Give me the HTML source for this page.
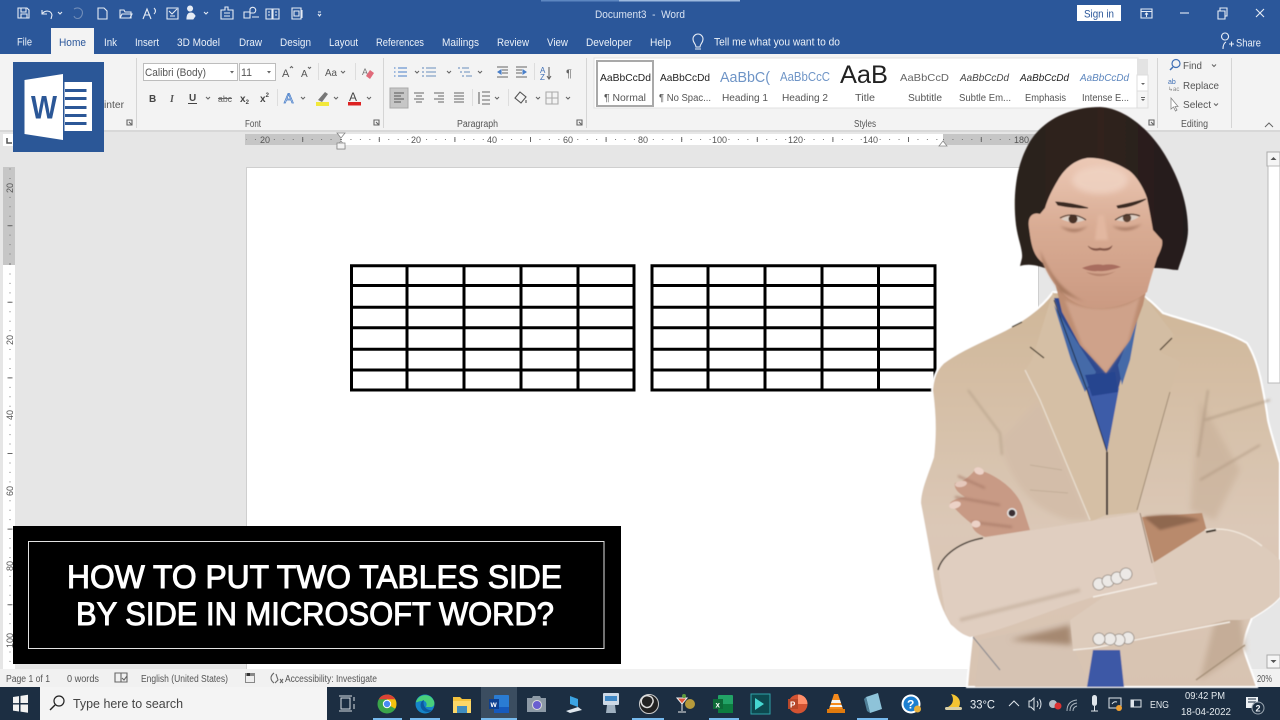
<!DOCTYPE html>
<html><head><meta charset="utf-8"><title>Word</title>
<style>
html,body{margin:0;padding:0;background:#e6e6e6;width:1280px;height:720px;overflow:hidden}
svg{display:block;position:absolute;left:0;top:0}
text{font-family:"Liberation Sans",sans-serif;font-size:10px;fill:#555;white-space:pre}
.t{font-size:11px;fill:#eaf0f8}
.g{font-size:10px;fill:#555}
.i{fill:none;stroke:#666;stroke-width:1.1}
.w{fill:none;stroke:#e6ecf5;stroke-width:1.1}
</style></head><body>
<svg width="1280" height="720" viewBox="0 0 1280 720" xmlns="http://www.w3.org/2000/svg">
<defs>
<filter id="b" x="-5%" y="-5%" width="110%" height="110%"><feGaussianBlur stdDeviation="0.35"/></filter>
<filter id="p" x="-5%" y="-5%" width="110%" height="110%"><feGaussianBlur stdDeviation="0.6"/></filter>
<filter id="s" x="-30%" y="-30%" width="160%" height="160%"><feGaussianBlur stdDeviation="3"/></filter>
<filter id="s2" x="-30%" y="-30%" width="160%" height="160%"><feGaussianBlur stdDeviation="1.2"/></filter>
<linearGradient id="jk" x1="0" y1="0" x2="0" y2="1"><stop offset="0" stop-color="#cfb698"/><stop offset=".3" stop-color="#d6c0a8"/><stop offset=".6" stop-color="#dbc8b7"/><stop offset="1" stop-color="#d8c3b1"/></linearGradient>
<linearGradient id="fc" x1="0" y1="0" x2="0" y2="1"><stop offset="0" stop-color="#ecc9b6"/><stop offset=".45" stop-color="#d9ac94"/><stop offset="1" stop-color="#cb9a82"/></linearGradient>
<linearGradient id="hr" x1="0" y1="0" x2="1" y2="0"><stop offset="0" stop-color="#2b201d"/><stop offset=".5" stop-color="#30241f"/><stop offset="1" stop-color="#241a1a"/></linearGradient>
</defs>

<!-- backgrounds -->
<rect width="1280" height="720" fill="#e6e6e6"/>
<rect y="0" width="1280" height="54" fill="#2b579a"/>
<rect x="541" y="0" width="78" height="1.5" fill="#5c86c0"/><rect x="619" y="0" width="121" height="1.5" fill="#9db9de"/>
<rect y="54" width="1280" height="77" fill="#f3f3f3"/>
<rect y="130" width="1280" height="2" fill="#d8d8d8"/>
<rect x="51" y="28" width="43" height="27" fill="#f3f3f3"/>

<!-- page -->
<rect x="246" y="167" width="793" height="502" fill="#cfcfcf"/>
<rect x="247" y="168" width="791" height="501" fill="#fff"/>

<g filter="url(#b)">
<!-- title bar -->
<g class="w">
<path d="M18 8h9l2 2v8H18zM21 8v4h5V8M21 18v-4h6v4"/>
<path d="M42 10v4h5M42 14c3-4 9-4 10 1l-1 4"/><path d="M58 12l2 2 2-2"/>
<path d="M74 9c5-3 10 1 8 6s-7 4-8 1" style="stroke:#6f8cb8"/>
<path d="M98 8h6l3 3v8h-9z"/>
<path d="M120 18v-8h4l1 2h6v6zM120 18l2-4h10l-2 4"/>
<path d="M143 19l4-10 4 10M145 15h5M154 8q3 3 0 6"/>
<path d="M167 8h11v11h-11zM169 11l3 3 5-5M170 16h5"/>
<path d="M190 11a2.5 2.5 0 1 1 .1 0M187 19c0-4 1-6 4-6s3 2 4 3l-2 3z" style="fill:#e6ecf5"/>
<path d="M204 12l2 2 2-2"/>
<path d="M221 10h4v-3h3v3h5v9h-12zM224 13h6M224 16h6"/>
<path d="M244 12h6v6h-6zM250 9a3 3 0 1 1 4 4h-4zM252 17h7"/>
<path d="M266 9h6v10h-6zM273 9h6v10h-6zM268 12h2M268 15h2M275 12h2M275 15h2"/>
<path d="M292 8h9v11h-9zM294 11h5v5h-5zM302 10v8"/>
<path d="M318 12h3M318 14l1.5 2 1.5-2"/>
</g>
<text class="t" x="595" y="18" textLength="90" lengthAdjust="spacingAndGlyphs" style="fill:#d9e3f2">Document3  -  Word</text>
<rect x="1077" y="5" width="44" height="16" fill="#fff"/>
<text x="1084" y="17.5" textLength="30" lengthAdjust="spacingAndGlyphs" style="font-size:11px;fill:#2b579a">Sign in</text>
<g class="w">
<path d="M1141 9h11v9h-11zM1141 11.5h11M1146.5 17v-4M1145 14.5l1.5-1.5 1.5 1.5"/>
<path d="M1180 13h9"/>
<path d="M1218 11h7v8h-7zM1220 11V8h7v8h-2"/>
<path d="M1256 9l8 8M1264 9l-8 8"/>
</g>

<!-- tabs -->
<text class="t" x="17" y="45.5" textLength="15" lengthAdjust="spacingAndGlyphs">File</text>
<text class="t" x="59" y="46" textLength="27" lengthAdjust="spacingAndGlyphs" style="fill:#2b579a">Home</text>
<text class="t" x="104" y="46" textLength="13" lengthAdjust="spacingAndGlyphs">Ink</text>
<text class="t" x="135" y="46" textLength="24" lengthAdjust="spacingAndGlyphs">Insert</text>
<text class="t" x="177" y="46" textLength="43" lengthAdjust="spacingAndGlyphs">3D Model</text>
<text class="t" x="239" y="46" textLength="23" lengthAdjust="spacingAndGlyphs">Draw</text>
<text class="t" x="280" y="46" textLength="31" lengthAdjust="spacingAndGlyphs">Design</text>
<text class="t" x="329" y="46" textLength="29" lengthAdjust="spacingAndGlyphs">Layout</text>
<text class="t" x="376" y="46" textLength="48" lengthAdjust="spacingAndGlyphs">References</text>
<text class="t" x="442" y="46" textLength="37" lengthAdjust="spacingAndGlyphs">Mailings</text>
<text class="t" x="497" y="46" textLength="32" lengthAdjust="spacingAndGlyphs">Review</text>
<text class="t" x="547" y="46" textLength="21" lengthAdjust="spacingAndGlyphs">View</text>
<text class="t" x="586" y="46" textLength="46" lengthAdjust="spacingAndGlyphs">Developer</text>
<text class="t" x="650" y="46" textLength="21" lengthAdjust="spacingAndGlyphs">Help</text>
<path class="w" d="M695 49h6M696 47c0-3-3-4-3-8a5 5 0 0 1 10 0c0 4-3 5-3 8z"/>
<text class="t" x="714" y="45.5" textLength="126" lengthAdjust="spacingAndGlyphs">Tell me what you want to do</text>
<path class="w" d="M1225 40a3.500 3.500 0 1 1 .1 0M1223 49c0-4 1-6 3-7M1229 44h5M1231.500 41.500v5"/>
<text class="t" x="1236" y="46.5" textLength="25" lengthAdjust="spacingAndGlyphs">Share</text>

<!-- clipboard remnant -->
<text class="g" x="104" y="108" textLength="20" lengthAdjust="spacingAndGlyphs">inter</text>
<path class="i" d="M127 120h5v5h-5zM129 122l3 3"/>
<rect x="136" y="58" width="1" height="70" fill="#d5d5d5"/>

<!-- font group -->
<rect x="143.5" y="63.5" width="94" height="17" fill="#fff" stroke="#bdbdbd"/>
<text x="145" y="76" textLength="61" lengthAdjust="spacingAndGlyphs" style="font-size:11px;fill:#555">Calibri (Body)</text>
<path d="M230 71l2 2.500 2-2.500z" fill="#666"/>
<rect x="239.5" y="63.5" width="36" height="17" fill="#fff" stroke="#bdbdbd"/>
<text x="241" y="76" textLength="11" lengthAdjust="spacingAndGlyphs" style="font-size:11px;fill:#555">11</text>
<path d="M267 71l2 2.500 2-2.500z" fill="#666"/>
<text x="282" y="77" style="font-size:11px;fill:#555">A</text><path class="i" d="M290 68l1.500-1.500 1.500 1.500"/>
<text x="301" y="77" style="font-size:10px;fill:#555">A</text><path class="i" d="M308 67l1.500 1.500 1.500-1.500"/>
<rect x="318" y="63" width="1" height="17" fill="#ddd"/>
<text x="325" y="76" textLength="12" lengthAdjust="spacingAndGlyphs" style="font-size:10.5px;fill:#555">Aa</text><path class="i" d="M341 71l2 2 2-2"/>
<rect x="355" y="63" width="1" height="17" fill="#ddd"/>
<text x="362" y="75" style="font-size:9px;fill:#777">A</text><path d="M366 76l4-6 4 3-4 6z" fill="#e06a7a"/>
<text x="149" y="102" style="font-size:10px;font-weight:bold;fill:#444">B</text>
<text x="170" y="102" style="font-size:10px;font-style:italic;font-weight:bold;fill:#555;font-family:'Liberation Serif',serif">I</text>
<text x="189" y="101" style="font-size:10px;font-weight:bold;fill:#444">U</text><rect x="188" y="103" width="9" height="1" fill="#444"/>
<path class="i" d="M206 97l2 2 2-2"/>
<text x="218" y="102" textLength="14" lengthAdjust="spacingAndGlyphs" style="font-size:9.5px;fill:#666">abc</text><rect x="218" y="98" width="14" height="1" fill="#666"/>
<text x="240" y="102" style="font-size:10px;font-weight:bold;fill:#444">x<tspan font-size="6" dy="2">2</tspan></text>
<text x="260" y="102" style="font-size:10px;font-weight:bold;fill:#444">x<tspan font-size="6" dy="-5">2</tspan></text>
<rect x="277" y="89" width="1" height="17" fill="#ddd"/>
<text x="284" y="103" style="font-size:14px;fill:#fff;stroke:#4a7fc9;stroke-width:.8">A</text><path class="i" d="M301 97l2 2 2-2"/>
<rect x="316" y="102" width="13" height="4" fill="#f2e83a"/><path d="M318 100l7-8 3 2-6 8z" fill="#777"/><path class="i" d="M334 97l2 2 2-2"/>
<text x="349" y="101" style="font-size:12px;fill:#444">A</text><rect x="348" y="102" width="13" height="3.5" fill="#d22"/><path class="i" d="M367 97l2 2 2-2"/>
<text class="g" x="245" y="127" textLength="16" lengthAdjust="spacingAndGlyphs">Font</text>
<path class="i" d="M374 120h5v5h-5zM376 122l3 3"/>
<rect x="383" y="58" width="1" height="70" fill="#d5d5d5"/>

<!-- paragraph -->
<g class="i">
<path d="M398 68h9M398 72h9M398 76h9M394 68h1.500M394 72h1.500M394 76h1.500" style="stroke:#4a7fc9"/>
<path d="M426 68h10M426 72h10M426 76h10M423 67v2M423 71v2M423 75v2" style="stroke:#6b8fbe"/>
<path d="M462 68h7M464 72h6M466 76h6M459 67v2M461 71v2M463 75v2" style="stroke:#6b8fbe"/>
<path d="M415 71l2 2 2-2M447 71l2 2 2-2M478 71l2 2 2-2"/>
<path d="M497 67h11M502 70h6M502 73h6M497 77h11"/><path d="M501 70l-3 2 3 2z" style="fill:#4a7fc9;stroke:#4a7fc9"/>
<path d="M516 67h11M516 70h6M516 73h6M516 77h11"/><path d="M523 70l3 2-3 2z" style="fill:#4a7fc9;stroke:#4a7fc9"/>
</g>
<rect x="534" y="63" width="1" height="17" fill="#ddd"/>
<text x="540" y="73" style="font-size:8px;fill:#3f6fb5">A</text><text x="540" y="80" style="font-size:8px;fill:#3f6fb5">Z</text><path class="i" d="M549 67v12M547 76l2 3 2-3"/>
<text x="566" y="77" style="font-size:11px;fill:#666">¶</text>
<rect x="390" y="88" width="18" height="20" fill="#c6c6c6" stroke="#a9a9a9"/>
<g class="i">
<path d="M394 93h10M394 96h7M394 99h10M394 102h7" style="stroke:#555"/>
<path d="M414 93h10M416 96h6M414 99h10M416 102h6"/>
<path d="M434 93h10M438 96h6M434 99h10M438 102h6"/>
<path d="M454 93h10M454 96h10M454 99h10M454 102h10"/>
<path d="M482 92h8M482 96h8M482 100h8M482 104h8M479 92v12"/>
<path d="M495 97l2 2 2-2M536 97l2 2 2-2M566 97l2 2 2-2"/>
<path d="M515 98l5-6 6 5-5 6zM526 100v3" style="stroke:#555"/>
<path d="M546 92h12v12h-12zM552 92v12M546 98h12" style="stroke:#aaa"/>
</g>
<rect x="472" y="89" width="1" height="17" fill="#ddd"/><rect x="508" y="89" width="1" height="17" fill="#ddd"/>
<text class="g" x="457" y="127" textLength="41" lengthAdjust="spacingAndGlyphs">Paragraph</text>
<path class="i" d="M577 120h5v5h-5zM579 122l3 3"/>
<rect x="586" y="58" width="1" height="70" fill="#d5d5d5"/>

<!-- styles -->
<rect x="594" y="58" width="544" height="50" fill="#fff" stroke="#e0e0e0"/>
<rect x="597" y="61" width="56" height="45" fill="#fff" stroke="#a9a9a9" stroke-width="2"/>
<text x="600" y="81" textLength="51" lengthAdjust="spacingAndGlyphs" style="font-size:10.5px;fill:#222">AaBbCcDd</text>
<text x="604" y="101" textLength="42" lengthAdjust="spacingAndGlyphs">¶ Normal</text>
<text x="660" y="81" textLength="50" lengthAdjust="spacingAndGlyphs" style="font-size:10.5px;fill:#222">AaBbCcDd</text>
<text x="659" y="101" textLength="52" lengthAdjust="spacingAndGlyphs">¶ No Spac...</text>
<text x="720" y="82" textLength="50" lengthAdjust="spacingAndGlyphs" style="font-size:15px;fill:#6e94c6">AaBbC(</text>
<text x="722" y="101" textLength="46" lengthAdjust="spacingAndGlyphs">Heading 1</text>
<text x="780" y="81" textLength="50" lengthAdjust="spacingAndGlyphs" style="font-size:13px;fill:#6e94c6">AaBbCcC</text>
<text x="782" y="101" textLength="46" lengthAdjust="spacingAndGlyphs">Heading 2</text>
<text x="840" y="83" textLength="48" lengthAdjust="spacingAndGlyphs" style="font-size:25px;fill:#222">AaB</text>
<rect x="838" y="59" width="54" height="5" fill="#fff"/>
<text x="855" y="101" textLength="20" lengthAdjust="spacingAndGlyphs">Title</text>
<text x="900" y="81" textLength="49" lengthAdjust="spacingAndGlyphs" style="font-size:10.5px;fill:#666">AaBbCcD</text>
<text x="908" y="101" textLength="34" lengthAdjust="spacingAndGlyphs">Subtitle</text>
<text x="960" y="81" textLength="49" lengthAdjust="spacingAndGlyphs" style="font-size:10.5px;font-style:italic;fill:#444">AaBbCcDd</text>
<text x="959" y="101" textLength="52" lengthAdjust="spacingAndGlyphs">Subtle Em...</text>
<text x="1020" y="81" textLength="49" lengthAdjust="spacingAndGlyphs" style="font-size:10.5px;font-style:italic;fill:#222">AaBbCcDd</text>
<text x="1025" y="101" textLength="41" lengthAdjust="spacingAndGlyphs">Emphasis</text>
<text x="1080" y="81" textLength="49" lengthAdjust="spacingAndGlyphs" style="font-size:10.5px;font-style:italic;fill:#5b85bd">AaBbCcDd</text>
<text x="1082" y="101" textLength="47" lengthAdjust="spacingAndGlyphs">Intense E...</text>
<rect x="1137" y="59" width="11" height="16" fill="#e3e3e3"/><rect x="1137" y="75" width="11" height="16" fill="#fff" stroke="#ddd"/><rect x="1137" y="91" width="11" height="17" fill="#f5f5f5" stroke="#ddd"/>
<path d="M1141 83l2 2 2-2z M1141 99l2 2 2-2z" fill="#666"/><rect x="1141" y="97" width="4" height="1" fill="#666"/>
<text class="g" x="854" y="127" textLength="22" lengthAdjust="spacingAndGlyphs">Styles</text>
<path class="i" d="M1149 120h5v5h-5zM1151 122l3 3"/>
<rect x="1157" y="58" width="1" height="70" fill="#d5d5d5"/>

<!-- editing -->
<path d="M1170 70l3-3" stroke="#3f6fb5" stroke-width="1.5" fill="none"/><circle cx="1176" cy="63.5" r="4" fill="none" stroke="#3f6fb5" stroke-width="1.2"/>
<text x="1183" y="69" textLength="19" lengthAdjust="spacingAndGlyphs" style="font-size:10.5px;fill:#555">Find</text>
<path class="i" d="M1212 64.500l2 2 2-2"/>
<text x="1168" y="84" style="font-size:7px;fill:#3f6fb5">ab</text><text x="1168" y="91" style="font-size:6px;fill:#888">↳ac</text>
<text x="1183" y="89" textLength="36" lengthAdjust="spacingAndGlyphs" style="font-size:10.5px;fill:#555">Replace</text>
<path d="M1171 98v11l2.500-2 2 4 1.500-1-2-3.500h3z" fill="#fff" stroke="#888" stroke-width=".8"/>
<text x="1183" y="108" textLength="28" lengthAdjust="spacingAndGlyphs" style="font-size:10.5px;fill:#555">Select</text>
<path class="i" d="M1214 103.500l2 2 2-2"/>
<text class="g" x="1181" y="127" textLength="27" lengthAdjust="spacingAndGlyphs">Editing</text>
<rect x="1231" y="58" width="1" height="70" fill="#d5d5d5"/>
<path d="M1265 127l4-4 4 4" fill="none" stroke="#666"/>

<!-- h ruler -->
<rect x="3" y="134" width="12" height="12" fill="#fff"/><path d="M7 138v5h5" stroke="#555" stroke-width="1.5" fill="none"/>
<rect x="245" y="134" width="96" height="11" fill="#c6c6c6"/>
<rect x="341" y="134" width="602" height="11" fill="#fff"/>
<rect x="943" y="134" width="95" height="11" fill="#c6c6c6"/>
<line x1="341" y1="139.5" x2="943" y2="139.5" stroke="#777" stroke-dasharray="1 8.45"/>
<line x1="341" y1="139.5" x2="246" y2="139.5" stroke="#777" stroke-dasharray="1 8.45"/>
<line x1="943" y1="139.5" x2="1037" y2="139.5" stroke="#777" stroke-dasharray="1 8.45"/>
<line x1="378.8" y1="139.5" x2="943" y2="139.5" stroke="#666" stroke-width="5" stroke-dasharray="1 74.6"/>
<line x1="303.2" y1="139.5" x2="246" y2="139.5" stroke="#666" stroke-width="5" stroke-dasharray="1 74.6"/>
<line x1="980.8" y1="139.5" x2="1037" y2="139.5" stroke="#666" stroke-width="5" stroke-dasharray="1 74.6"/>
<rect x="258" y="135" width="12" height="9" fill="#c6c6c6"/><text x="260" y="143" style="font-size:9px">20</text>
<rect x="410" y="135" width="13" height="9" fill="#fff"/><text x="411" y="143" style="font-size:9px">20</text>
<rect x="486" y="135" width="13" height="9" fill="#fff"/><text x="487" y="143" style="font-size:9px">40</text>
<rect x="562" y="135" width="13" height="9" fill="#fff"/><text x="563" y="143" style="font-size:9px">60</text>
<rect x="637" y="135" width="13" height="9" fill="#fff"/><text x="638" y="143" style="font-size:9px">80</text>
<rect x="711" y="135" width="17" height="9" fill="#fff"/><text x="712" y="143" style="font-size:9px">100</text>
<rect x="787" y="135" width="17" height="9" fill="#fff"/><text x="788" y="143" style="font-size:9px">120</text>
<rect x="862" y="135" width="17" height="9" fill="#fff"/><text x="863" y="143" style="font-size:9px">140</text>
<rect x="1013" y="135" width="17" height="9" fill="#c6c6c6"/><text x="1014" y="143" style="font-size:9px">180</text>
<path d="M337 133h8l-4 5zM337 146l4-5 4 5v3h-8z" fill="#fff" stroke="#888" stroke-width=".8"/>
<rect x="337" y="143" width="8" height="6" fill="#f3f3f3" stroke="#888" stroke-width=".8"/>
<path d="M939 146l4-5 4 5z" fill="#fff" stroke="#888" stroke-width=".8"/>

<!-- v ruler -->
<rect x="3" y="167" width="12" height="98" fill="#c6c6c6"/>
<rect x="3" y="265" width="12" height="404" fill="#fff"/>
<line x1="10" y1="264" x2="10" y2="168" stroke="#777" stroke-dasharray="1 8.45"/>
<line x1="10" y1="264" x2="10" y2="668" stroke="#777" stroke-dasharray="1 8.45"/>
<line x1="10" y1="226.2" x2="10" y2="168" stroke="#666" stroke-width="5" stroke-dasharray="1 74.6"/>
<line x1="10" y1="301.8" x2="10" y2="668" stroke="#666" stroke-width="5" stroke-dasharray="1 74.6"/>
<rect x="4" y="181" width="10" height="14" fill="#c6c6c6"/><text transform="translate(13,193) rotate(-90)" style="font-size:9px">20</text>
<rect x="4" y="333" width="10" height="14" fill="#fff"/><text transform="translate(13,345) rotate(-90)" style="font-size:9px">20</text>
<rect x="4" y="408" width="10" height="14" fill="#fff"/><text transform="translate(13,420) rotate(-90)" style="font-size:9px">40</text>
<rect x="4" y="484" width="10" height="14" fill="#fff"/><text transform="translate(13,496) rotate(-90)" style="font-size:9px">60</text>
<rect x="4" y="559" width="10" height="14" fill="#fff"/><text transform="translate(13,571) rotate(-90)" style="font-size:9px">80</text>
<rect x="4" y="632" width="10" height="18" fill="#fff"/><text transform="translate(13,648) rotate(-90)" style="font-size:9px">100</text>

<!-- scrollbar -->
<rect x="1267" y="152" width="13" height="516" fill="#e6e6e6"/>
<rect x="1267" y="152" width="13" height="14" fill="#f5f5f5" stroke="#aaa"/>
<rect x="1268" y="166" width="12" height="217" fill="#fff" stroke="#bbb"/>
<rect x="1267" y="655" width="13" height="13" fill="#f5f5f5" stroke="#aaa"/>
<path d="M1270.5 160l3-3 3 3z M1270.5 660l3 3 3-3z" fill="#555"/>

<!-- tables -->
<g fill="none" stroke="#000" stroke-width="3">
<path d="M351.5 265.7H634V390H351.5Z"/>
<path d="M407 265v125M464 265v125M521 265v125M578 265v125"/>
<path d="M351 285.5H634M351 307.3H634M351 327.7H634M351 349.3H634M351 370H634"/>
<path d="M652 265.7H935V390H652Z"/>
<path d="M708 265v125M765 265v125M822 265v125M878.5 265v125"/>
<path d="M652 285.5H935M652 307.3H935M652 327.7H935M652 349.3H935M652 370H935"/>
</g>
</g>

<!-- status bar -->
<g filter="url(#b)">
<rect y="669" width="1280" height="18" fill="#f1f1f1"/>
<text x="6" y="682" textLength="44" lengthAdjust="spacingAndGlyphs" style="font-size:10px;fill:#555">Page 1 of 1</text>
<text x="67" y="682" textLength="32" lengthAdjust="spacingAndGlyphs" style="font-size:10px;fill:#555">0 words</text>
<path class="i" d="M115 673h6v9h-6zM121 673h6v9h-6zM122 678l2 2 3-4"/>
<text x="141" y="682" textLength="87" lengthAdjust="spacingAndGlyphs" style="font-size:10px;fill:#555">English (United States)</text>
<path d="M245 673h10v10h-10z" fill="#888"/><rect x="246" y="676" width="8" height="6" fill="#eee"/><rect x="247" y="673" width="3" height="3" fill="#333"/>
<path class="i" d="M274 673c-4 3-4 7 0 10M276 674l2 6-3 3M280 679l3 4M283 679l-3 4"/>
<text x="285" y="682" textLength="92" lengthAdjust="spacingAndGlyphs" style="font-size:10px;fill:#555">Accessibility: Investigate</text>
<text x="1257" y="682" textLength="15" lengthAdjust="spacingAndGlyphs" style="font-size:10px;fill:#555">20%</text>
</g>

<!-- taskbar -->
<g filter="url(#b)">
<rect y="687" width="1280" height="33" fill="#1b2f42"/>
<path d="M13 697l6-.9v7h-6zM20.5 695.900l7.500-1.100v8.200h-7.500zM13 704.500h6v7l-6-.9zM20.5 704.500h7.500v8.200l-7.500-1.100z" fill="#f2f2f2"/>
<rect x="40" y="687" width="287" height="33" fill="#f4f4f4"/>
<path d="M50 710l5-5" stroke="#222" stroke-width="1.4"/><circle cx="59" cy="701" r="5" fill="none" stroke="#222" stroke-width="1.2"/>
<text x="73" y="708" textLength="110" lengthAdjust="spacingAndGlyphs" style="font-size:13px;fill:#444">Type here to search</text>
<rect x="481" y="687" width="36" height="33" fill="#3a4d60"/>
<path d="M341 698h9v11h-9zM339 696h13M339 711h13M354 697v4M354 704v5" fill="none" stroke="#d8dde3"/>
<!-- chrome -->
<circle cx="387" cy="704" r="9.5" fill="#3ba54a"/>
<path d="M387 694.500a9.500 9.500 0 0 1 8.200 14.250L387 704z" fill="#f4c20d"/>
<path d="M378.800 699.250A9.500 9.500 0 0 1 395.200 699.250H387z" fill="#dd4335"/>
<circle cx="387" cy="704" r="4.2" fill="#fff"/><circle cx="387" cy="704" r="3.2" fill="#4a8af4"/>
<!-- edge -->
<circle cx="425" cy="704" r="9.5" fill="#1484c8"/>
<path d="M416 702c2-8 14-10 18-1 1 3 0 6-3 6h-5c2-4-1-7-4-6-4 0-5 2-6 1z" fill="#4ad07c"/>
<path d="M424 700c-4 1-5 8 0 11 2 1 5 2 8-1-5 1-10-4-8-10z" fill="#0c5aa0"/>
<!-- explorer -->
<path d="M453 697h7l2 2h9v14h-18z" fill="#f3c23c"/><rect x="453" y="701" width="18" height="12" fill="#fbd767"/><rect x="457" y="706" width="10" height="7" fill="#3f8dbf"/>
<!-- word -->
<rect x="494" y="695" width="15" height="18" rx="1" fill="#2b7cd3"/><rect x="494" y="707" width="15" height="6" fill="#185abd"/><rect x="489" y="699" width="10" height="10" fill="#103f91"/>
<text x="490.5" y="707" style="font-size:8px;font-weight:bold;fill:#fff">w</text>
<!-- camera -->
<path d="M527 698h5l1-2h7l1 2h5v14h-19z" fill="#8d9aa6"/><circle cx="537" cy="705" r="4.5" fill="#6a5fd0" stroke="#ddd"/>
<!-- pc -->
<path d="M570 696l8 3v8l-8-3z" fill="#3aa3e3"/><path d="M566 711l12-4 4 3-12 3z" fill="#dfe7ee"/>
<!-- monitor -->
<rect x="603" y="693" width="16" height="12" rx="1" fill="#cdd9e6"/><rect x="605" y="696" width="12" height="5" fill="#3f88c5"/><path d="M607 705h8l1 8h-10z" fill="#9fb0c0"/>
<!-- obs -->
<circle cx="649" cy="704" r="9.5" fill="#222" stroke="#ccc"/><path d="M649 696a5 5 0 0 1 3 8 5 5 0 0 1-7 3 5 5 0 0 1 4-11z" fill="none" stroke="#ddd" stroke-width="1.5"/>
<!-- cocktail -->
<path d="M677 698h10l-5 6zM682 704v7M678 712h8" fill="#e0573a" stroke="#eee"/><circle cx="690" cy="704" r="5" fill="#b69a3a"/><circle cx="684" cy="696" r="2" fill="#5c9a3d"/>
<!-- excel -->
<rect x="718" y="695" width="15" height="18" rx="1" fill="#21a366"/><rect x="718" y="704" width="15" height="9" fill="#107c41"/><rect x="713" y="699" width="10" height="10" fill="#0e6b37"/>
<text x="715.5" y="707.5" style="font-size:8px;font-weight:bold;fill:#fff">x</text>
<!-- teal -->
<rect x="751" y="694" width="19" height="20" fill="#0d4a50" stroke="#2fa3a8"/><path d="M755 698l9 6-9 6z" fill="#45d7d0"/>
<!-- ppt -->
<circle cx="798" cy="704" r="9.5" fill="#d35230"/><path d="M798 694.500a9.500 9.500 0 0 1 9.500 9.500H798z" fill="#ff8f6b"/><rect x="788" y="699" width="10" height="10" fill="#b7472a"/>
<text x="790" y="707.5" style="font-size:8px;font-weight:bold;fill:#fff">P</text>
<!-- vlc -->
<path d="M834 694h4l5 15h-14z" fill="#f58a1f"/><path d="M832 700h8l1 3h-10zM830.500 705h11l.9 2h-12.800z" fill="#f4f4f4"/><rect x="827" y="709" width="18" height="4" fill="#e07a10"/>
<!-- notes -->
<path d="M866 697l12-4 4 16-12 4z" fill="#8ec3d9"/><path d="M866 697l4 16-3-2-3-12z" fill="#4f7f97"/>
<!-- help -->
<circle cx="911" cy="704" r="9.5" fill="#fff"/><circle cx="911" cy="704" r="7.5" fill="#1d7fd0"/><text x="907" y="708.5" style="font-size:12px;font-weight:bold;fill:#fff">?</text><circle cx="917.5" cy="709" r="3.5" fill="#e8b03a"/>
<!-- weather -->
<path d="M951 694c3 4 3 10-3 13h11c3-6-1-12-8-13z" fill="#f4c430"/><rect x="945" y="707" width="17" height="3" rx="1.5" fill="#d8cfa8"/>
<text x="970" y="708.5" textLength="25" lengthAdjust="spacingAndGlyphs" style="font-size:12px;fill:#eef2f6">33°C</text>
<g fill="none" stroke="#dfe5eb">
<path d="M1009 706l5-5 5 5"/>
<path d="M1029 701h2l3-3v12l-3-3h-2zM1037 701q2 3 0 6M1039.500 699q3 5 0 10"/>
<path d="M1070 711q0-7 7-8M1073 711q0-4 4-5M1067 711q0-10 10-11" stroke="#aab4be"/>
<rect x="1109" y="698" width="12" height="10"/><path d="M1112 704q2-3 5-2"/>
<rect x="1131" y="700" width="10" height="7"/>
</g>
<circle cx="1053" cy="704" r="4" fill="#b4bcc4"/><circle cx="1058" cy="706" r="3.5" fill="#d33"/>
<rect x="1092" y="695" width="5" height="11" rx="2.5" fill="#dfe5eb"/><path d="M1094.500 706v5M1091 711h7" stroke="#dfe5eb"/>
<circle cx="1119" cy="708" r="3" fill="#f0a030"/><rect x="1131" y="700" width="3" height="7" fill="#dfe5eb"/>
<text x="1150" y="708" textLength="19" lengthAdjust="spacingAndGlyphs" style="font-size:10.5px;fill:#e4e9ee">ENG</text>
<text x="1185" y="699" textLength="40" lengthAdjust="spacingAndGlyphs" style="font-size:10.5px;fill:#e4e9ee">09:42 PM</text>
<text x="1181" y="715" textLength="50" lengthAdjust="spacingAndGlyphs" style="font-size:10.5px;fill:#e4e9ee">18-04-2022</text>
<path d="M1246 697h12v8l-3 3h-9z" fill="#eef2f6"/><path d="M1248 699h8M1248 702h8" stroke="#1b2f42"/>
<circle cx="1258" cy="708" r="6" fill="#1b2f42" stroke="#9aa5b0"/><text x="1255.5" y="711.5" style="font-size:9px;font-weight:bold;fill:#eef2f6">2</text>
<g fill="#76b9ed">
<rect x="373" y="718" width="29" height="2"/><rect x="410" y="718" width="30" height="2"/><rect x="481" y="718" width="36" height="2"/>
<rect x="632" y="718" width="32" height="2"/><rect x="709" y="718" width="30" height="2"/><rect x="857" y="718" width="31" height="2"/>
</g>
</g>

<!-- person -->
<g filter="url(#p)">
<path d="M1053 292C1040 310 1020 322 1005 330C985 340 960 350 943 363C936 370 933 378 932 390C936 420 935 440 933 457C927 475 920 490 920 503C925 530 930 555 933 577C937 600 942 612 950 625C958 632 965 636 972 637C970 655 968 672 967 687L1257 687C1252 672 1247 660 1243 647C1245 635 1248 628 1252 618C1262 612 1272 606 1280 597L1280 463C1275 445 1270 430 1268 420C1266 405 1264 395 1262 385C1258 365 1253 352 1247 343C1225 330 1190 322 1163 313C1155 305 1150 300 1145 297Z" fill="url(#jk)" stroke="#fff" stroke-width="2"/>
<!-- jacket shading -->
<path d="M1000 440C1010 480 1030 510 1070 520L1090 520L1040 400Z" fill="#d3bda9" filter="url(#s)"/>
<path d="M1200 400L1190 510L1215 520L1240 470Z" fill="#c7af98" filter="url(#s)" opacity=".6"/>
<path d="M980 640L1070 620L1075 650L1090 687L975 687Z" fill="#d6c3b3"/>
<path d="M1010 640L1070 625L1072 645Z" fill="#a58871" filter="url(#s)"/>
<path d="M1215 620L1240 610L1245 650L1200 680Z" fill="#c5ad98" filter="url(#s)"/>
<!-- lapels -->
<path d="M1053 292L1032 360L1025 370L1090 522L1106 515L1107 452L1087 390Z" fill="#d5bfa5"/>
<path d="M1145 297L1174 335L1160 352L1180 362L1170 392L1137 512L1108 515L1107 452L1118 390Z" fill="#d3bda3"/>
<!-- shirt -->
<path d="M1054 298L1143 298L1118 390L1107 452L1087 390Z" fill="#2f4a8f"/>
<path d="M1087 388L1119 388L1107 452Z" fill="#3d5ba8"/>
<path d="M1054 305L1066 325L1096 372L1085 392L1071 360Z" fill="#456ba8"/>
<path d="M1140 305L1132 330L1118 365L1122 385L1130 360Z" fill="#456ba8"/>
<path d="M1085 375L1115 372L1118 392L1092 396Z" fill="#27448f"/>
<path d="M1054 300L1087 390L1107 452" fill="none" stroke="#1f2840" stroke-width="1"/>
<path d="M1107 452V515" stroke="#3a3230" stroke-width="2" fill="none"/>
<!-- lapel lines -->
<path d="M1025 370L1040 400L1090 520" fill="none" stroke="#e8ddcf" stroke-width="1.3"/>
<path d="M1170 392L1137 510" fill="none" stroke="#a08b74" stroke-width="1"/>
<path d="M1030 347L1044 358M1012 327L1022 322" fill="none" stroke="#4a4030" stroke-width="1.3"/>
<path d="M1160 350L1172 338" fill="none" stroke="#5a4c3a" stroke-width="1.3"/>
<!-- lower blue -->
<path d="M1093 650L1120 650L1124 687L1087 687Z" fill="#3c59a6"/>
<!-- neck -->
<path d="M1055 282L1148 282L1143 305L1130 340L1106 373L1080 345L1062 312Z" fill="#bd8d72"/>
<path d="M1065 300C1085 312 1125 312 1140 296L1128 342L1106 373L1082 345Z" fill="#cfa28a" filter="url(#s2)"/>
<!-- hair -->
<path d="M1100 107C1070 107 1040 120 1027 147C1015 170 1013 200 1016 225C1018 240 1023 250 1022 258L1020 266C1030 263 1038 266 1045 268L1157 268C1165 268 1172 270 1178 270C1180 262 1188 245 1188 230C1188 205 1180 180 1165 155C1150 130 1125 108 1100 107Z" fill="url(#hr)"/>
<!-- face -->
<path d="M1087 158C1075 160 1065 168 1058 180C1052 190 1048 198 1045 208L1040 214C1033 212 1027 216 1029 228C1031 242 1032 255 1043 263C1048 275 1053 283 1060 290C1068 300 1080 307 1095 308C1110 309 1130 305 1147 292C1150 280 1154 268 1157 258C1161 250 1163 245 1162 240L1153 230C1151 218 1149 208 1147 198C1143 186 1135 174 1128 170C1115 162 1100 157 1087 158Z" fill="url(#fc)"/>
<ellipse cx="1100" cy="180" rx="28" ry="14" fill="#f0d4c4" filter="url(#s)" opacity=".8"/>
<path d="M1040 250C1048 270 1060 290 1085 302L1060 292L1043 263Z" fill="#a87a60" filter="url(#s2)"/>
<path d="M1060 226Q1074 238 1088 226Q1075 232 1060 226ZM1112 226Q1127 236 1142 224Q1127 230 1112 226Z" fill="#a87a64" filter="url(#s2)"/>
<!-- brows -->
<path d="M1056 202Q1072 203 1088 208Q1072 208 1058 205Z" fill="#3a2a24" stroke="#3a2a24"/>
<path d="M1117 206Q1132 203 1146 199Q1133 207 1118 208Z" fill="#3a2a24" stroke="#3a2a24"/>
<!-- eyes -->
<path d="M1061 219Q1073 212 1085 220Q1073 225 1061 219Z" fill="#dcd0c6"/>
<path d="M1116 220Q1128 212 1139 217Q1128 224 1116 220Z" fill="#dcd0c6"/>
<circle cx="1073" cy="219" r="4.5" fill="#4a3226"/><circle cx="1127" cy="218" r="4.2" fill="#5a4030"/>
<path d="M1060 218Q1073 211 1086 220M1115 220Q1128 211 1140 216" fill="none" stroke="#3a2a24" stroke-width="1.2"/>
<!-- nose -->
<path d="M1088 246Q1093 250 1100 248Q1107 250 1112 246Q1110 252 1100 250Q1092 252 1088 246Z" fill="#85584a" stroke="#85584a" stroke-width=".6"/>
<path d="M1098 215L1095 240L1108 240L1104 215Z" fill="#e2b7a0" filter="url(#s2)"/>
<!-- mouth -->
<path d="M1082 268Q1095 263 1103 265Q1112 263 1121 267Q1105 272 1098 271Q1090 272 1082 268Z" fill="#a86d5e"/>
<path d="M1086 272Q1100 281 1116 271Q1105 276 1086 272Z" fill="#b88670"/>
<!-- forearm right (lower) -->
<path d="M1142 517L1202 513L1208 535L1155 566Z" fill="#b98a6c"/>
<path d="M1144 517Q1175 512 1200 520L1160 530Z" fill="#8f6750" filter="url(#s2)"/>
<path d="M1153 563L1205 530C1225 528 1255 535 1280 560L1280 597C1272 606 1262 612 1252 618C1240 622 1230 618 1220 622L1073 650L1070 620Z" fill="#ddcbbb"/>
<path d="M1205 530Q1235 525 1262 546" fill="none" stroke="#f0e6da" stroke-width="1.5"/>
<path d="M1206 532L1216 530" stroke="#3a3026" stroke-width="2"/>
<!-- hand -->
<path d="M950 503Q955 498 965 497Q953 490 955 483Q965 482 975 470Q985 470 1000 480Q1015 490 1022 505L1030 530L985 537Q972 532 972 524Q960 515 950 503Z" fill="#c89a85"/>
<path d="M958 476L985 488M955 497L1000 505M972 522L1012 527" fill="none" stroke="#a07260" stroke-width="1.5" filter="url(#s2)"/>
<ellipse cx="979" cy="471" rx="5" ry="3.5" fill="#ecd2c7" transform="rotate(20 979 471)"/>
<ellipse cx="961" cy="484" rx="6" ry="3" fill="#e5c8bb" transform="rotate(-10 961 484)"/>
<ellipse cx="955" cy="505" rx="6" ry="3.5" fill="#ecd2c7" transform="rotate(-15 955 505)"/>
<ellipse cx="976" cy="524" rx="4.5" ry="3.5" fill="#ecd2c7"/>
<circle cx="1012" cy="513" r="5" fill="#e9e6e4"/><circle cx="1012" cy="513" r="3.5" fill="#3a2e30"/>
<!-- forearm left (top) -->
<path d="M938 567C945 552 965 540 983 538L1033 530L1140 513L1157 583L1093 597C1050 610 1005 630 970 637C958 633 950 625 945 612Z" fill="#e0cec0"/>
<path d="M938 570C942 555 960 542 983 538" fill="none" stroke="#4a4038" stroke-width="1.5"/>
<path d="M1093 597L1157 583" fill="none" stroke="#f4ede6" stroke-width="1.5"/>
<path d="M1140 513L1152 563" fill="none" stroke="#9a8370" stroke-width="1"/>
<path d="M960 620L1080 590" fill="none" stroke="#cdb9a8" stroke-width="4" filter="url(#s2)"/>
<!-- sleeve lines -->
<path d="M968 390L1000 433L1002 455" fill="none" stroke="#b09b84" stroke-width="1.3" filter="url(#s2)"/>
<path d="M1208 390L1198 457M1205 420L1270 400M1200 480L1260 445" fill="none" stroke="#a8917a" stroke-width="1.2" filter="url(#s2)"/>
<path d="M1030 465L1062 470M1030 490L1068 493" fill="none" stroke="#c2ad99" stroke-width="1"/>
<path d="M973 637L1000 670" stroke="#8a8a90" stroke-width="1.2" fill="none"/>
<path d="M1196 680L1245 645" stroke="#a8937c" stroke-width="1.5" fill="none"/>
<path d="M1073 650L1093 648L1230 622" fill="none" stroke="#f2ebe3" stroke-width="1.4"/>
<!-- buttons -->
<g fill="#ece9e6" stroke="#8a8078" stroke-width=".8">
<circle cx="1099" cy="584" r="6"/><circle cx="1108" cy="581" r="6"/><circle cx="1117" cy="578" r="6"/><circle cx="1126" cy="574" r="6"/>
<circle cx="1128" cy="638" r="6"/><circle cx="1119" cy="640" r="6"/><circle cx="1110" cy="639" r="6"/><circle cx="1099" cy="639" r="6"/>
</g>
</g>

<!-- logo -->
<rect x="13" y="62" width="91" height="90" fill="#2b5797"/>
<path d="M24.5 80L63 74V140L24.5 134Z" fill="#fff"/>
<rect x="64.5" y="82" width="27.5" height="49" fill="#fff"/>
<g fill="#2b5797"><rect x="65" y="89" width="21.5" height="3"/><rect x="65" y="97" width="21.5" height="3"/><rect x="65" y="106" width="21.5" height="3"/><rect x="65" y="114" width="21.5" height="3"/><rect x="65" y="122" width="21.5" height="3"/></g>
<text x="31" y="118.5" textLength="26" lengthAdjust="spacingAndGlyphs" style="font-size:32px;font-weight:bold;fill:#2b5797">W</text>

<!-- banner -->
<rect x="13" y="526" width="608" height="138" fill="#000"/>
<rect x="28.5" y="541.5" width="575.5" height="107" fill="none" stroke="#e2e2e2"/>
<text x="67" y="588" textLength="495" lengthAdjust="spacingAndGlyphs" style="font-size:32px;fill:#fff;stroke:#fff;stroke-width:1">HOW TO PUT TWO TABLES SIDE</text>
<text x="76" y="625" textLength="478" lengthAdjust="spacingAndGlyphs" style="font-size:32px;fill:#fff;stroke:#fff;stroke-width:1">BY SIDE IN MICROSOFT WORD?</text>
</svg>
</body></html>
